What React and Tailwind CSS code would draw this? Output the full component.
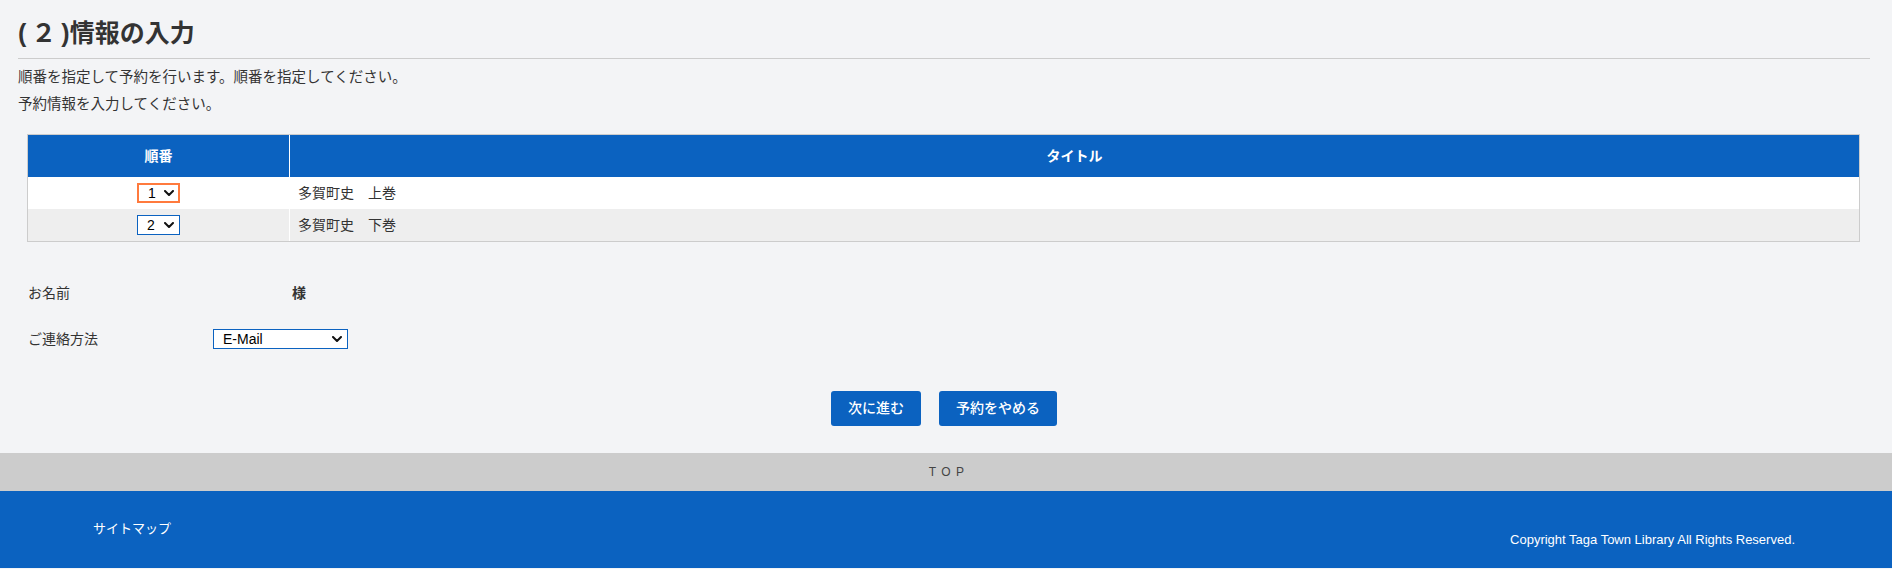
import React from 'react';

const rows = [
  { no: '1', title: '多賀町史　上巻', focused: true },
  { no: '2', title: '多賀町史　下巻', focused: false },
];

// 下向きの矢印（セレクトの▼）
const Chevron = () => (
  <svg width="10" height="6" viewBox="0 0 10 6" className="shrink-0">
    <path d="M1 1l4 4 4-4" fill="none" stroke="#111" strokeWidth="2" strokeLinecap="round" strokeLinejoin="round" />
  </svg>
);

const FakeSelect = ({ value, width, focused }) => (
  <div
    className={
      'inline-flex items-center justify-between h-[20px] bg-white text-[14px] leading-none text-black ' +
      (focused ? 'border-2 border-[#ff7a3d] pl-[9px] pr-[4px]' : 'border border-[#0b62c0] pl-[9px] pr-[5px]')
    }
    style={{ width }}
  >
    <span>{value}</span>
    <Chevron />
  </div>
);

export default function App() {
  return (
    <div className="min-h-[569px] bg-[#f3f4f6] text-[#333] font-['Liberation_Sans','Noto_Sans_CJK_JP',sans-serif]">
      {/* 本文 */}
      <div className="pl-[18px] pr-[22px] pt-[14px]">
        <h2 className="text-[25px] font-bold leading-[38px] pb-[6px] border-b border-[#cccccc]">
          (<span className="px-[5px]">２</span>)情報の入力
        </h2>
        <div className="mt-[5px] text-[14.5px] leading-[27px]">
          <p>順番を指定して予約を行います。順番を指定してください。</p>
          <p>予約情報を入力してください。</p>
        </div>

        {/* 予約一覧 */}
        <div className="mt-[16px] ml-[9px] mr-[10px] border border-[#cccccc] text-[14px]">
          <div className="flex h-[42px] bg-[#0b62c0] text-white font-bold">
            <div className="w-[262px] flex items-center justify-center border-r border-white">順番</div>
            <div className="flex-1 flex items-center justify-center">タイトル</div>
          </div>
          {rows.map((r, i) => (
            <div key={r.no} className={'flex h-[32px] ' + (i % 2 === 0 ? 'bg-white' : 'bg-[#eeeeee]')}>
              <div className="w-[262px] flex items-center justify-center border-r border-white">
                <FakeSelect value={r.no} width="43px" focused={r.focused} />
              </div>
              <div className="flex-1 flex items-center pl-[8px]">{r.title}</div>
            </div>
          ))}
        </div>

        {/* 利用者情報 */}
        <div className="mt-[28px] ml-[10px] text-[14px]">
          <div className="flex items-center h-[46px]">
            <div className="w-[185px]">お名前</div>
            <div className="pl-[79px] font-bold">様</div>
          </div>
          <div className="flex items-center h-[46px]">
            <div className="w-[185px]">ご連絡方法</div>
            <FakeSelect value="E-Mail" width="135px" />
          </div>
        </div>

        <div className="mt-[29px] mb-[27px] flex justify-center gap-[18px]">
          <button className="h-[35px] px-[17px] rounded-[3px] bg-[#0b62c0] text-white text-[14px] font-medium">次に進む</button>
          <button className="h-[35px] px-[17px] rounded-[3px] bg-[#0b62c0] text-white text-[14px] font-medium">予約をやめる</button>
        </div>
      </div>

      {/* ページトップ */}
      <div className="h-[38px] bg-[#cccccc] flex items-center justify-center text-[12px] tracking-[0.45em] text-[#444] pl-[6px]">TOP</div>

      {/* フッター */}
      <div className="h-[77px] bg-[#0b62c0] text-white text-[13px] leading-[20px] flex justify-between pl-[93px] pr-[97px]">
        <div className="pt-[28px]">サイトマップ</div>
        <div className="self-end pb-[18px]">Copyright Taga Town Library All Rights Reserved.</div>
      </div>
    </div>
  );
}
